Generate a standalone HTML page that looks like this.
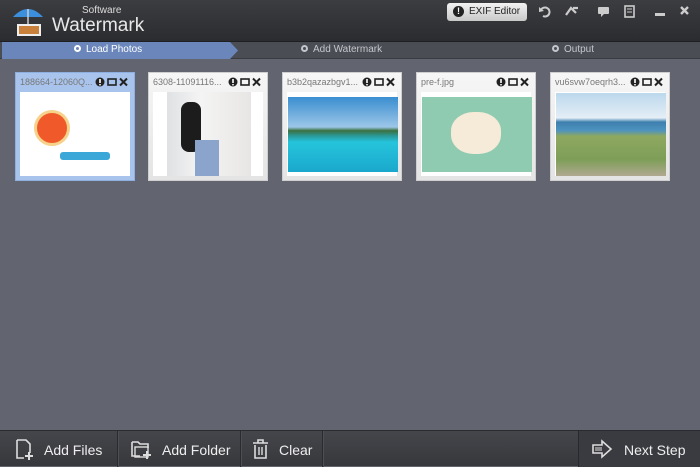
<!DOCTYPE html>
<html><head><style>
*{margin:0;padding:0;box-sizing:border-box}
body{width:700px;height:466px;overflow:hidden;background:#62656f;font-family:"Liberation Sans",sans-serif;position:relative}
.top{position:absolute;left:0;top:0;width:700px;height:42px;background:linear-gradient(#3c3d41,#2b2c30);border-bottom:1px solid #1e1f22}
.steps{position:absolute;left:0;top:42px;width:700px;height:17px;background:#4b4d54;border-bottom:1px solid #3a3b40;font-size:10px;color:#c4c6cc}
.blue{position:absolute;left:2px;top:0;height:17px;width:236px;background:#6a86bb;clip-path:polygon(0 0,228px 0,236px 8.5px,228px 17px,0 17px)}
.st{position:absolute;top:2px}
.st i{display:inline-block;width:7px;height:7px;border:2px solid currentColor;border-radius:50%;margin-right:5px}
.card{position:absolute;top:72px;width:120px;height:109px;background:linear-gradient(#f6f6f6,#e4e4e4);border:1px solid #cfcfcf}
.card.sel{background:#a9c4ec;border-color:#8eb0e0}
.card .n{position:absolute;left:4px;top:4px;font-size:9px;color:#777}
.card .ic{position:absolute;right:5px;top:4px}
.card .w{position:absolute;left:4px;top:19px;width:110px;height:84px;background:#fff}
.card .p{position:absolute}
.bot{position:absolute;left:0;top:430px;width:700px;height:36px;background:linear-gradient(#45464b,#37383c);border-top:1px solid #2a2b2e;color:#eee;font-size:14px}
.bt{position:absolute;top:11px}
.bi{position:absolute;top:8px}
.sep{position:absolute;top:0;width:1px;height:36px;background:#2a2b2f;box-shadow:1px 0 #4e4f54}
</style></head><body>
<svg width="0" height="0" style="position:absolute"><defs><g id="ci"><circle cx="5" cy="5" r="4.5" fill="#222"/><rect x="4.2" y="2" width="1.6" height="4" fill="#fff"/><rect x="4.2" y="7" width="1.6" height="1.4" fill="#fff"/><rect x="13" y="2" width="8" height="6" fill="none" stroke="#222" stroke-width="1.6"/><path d="M25 1.5 L32 8.5 M32 1.5 L25 8.5" stroke="#222" stroke-width="2"/></g></defs></svg>
<div class="top">
 <svg style="position:absolute;left:10px;top:3px" width="42" height="34"><path d="M3 14 Q18 -2 33 14 Z" fill="#3c8fdc"/><line x1="18" y1="6" x2="18" y2="24" stroke="#ccc" stroke-width="1.5"/><rect x="7" y="21" width="24" height="12" fill="#eee"/><rect x="9" y="23" width="20" height="8" fill="#c8803a"/></svg>
 <div style="position:absolute;left:82px;top:5px;font-size:10px;color:#ddd">Software</div>
 <div style="position:absolute;left:52px;top:15px;font-size:19px;color:#e8e8e8">Watermark</div>
 <div style="position:absolute;left:447px;top:3px;width:80px;height:18px;border-radius:3px;background:linear-gradient(#f2f2f2,#c8c8c8);font-size:10px;color:#222;padding:3px 0 0 6px"><span style="display:inline-block;width:11px;height:11px;border-radius:50%;background:#222;color:#fff;text-align:center;font-size:9px;line-height:11px;font-weight:bold;margin-right:5px">!</span>EXIF Editor</div>
 <svg style="position:absolute;left:538px;top:5px" width="155" height="14"><path d="M3 5 A4.5 4.5 0 1 1 5 11" fill="none" stroke="#ccc" stroke-width="2"/><path d="M1 2 L1 7 L6 6 Z" fill="#ccc"/>
 <path d="M28 10 L33 3 L38 8 M35 3 L40 3" fill="none" stroke="#ccc" stroke-width="2.2"/>
 <rect x="60" y="2" width="11" height="7" rx="1" fill="#ccc"/><path d="M63 9 L63 12 L66 9Z" fill="#ccc"/>
 <rect x="87" y="1" width="9" height="11" fill="none" stroke="#ccc" stroke-width="1.6"/><path d="M89 4h5M89 7h5" stroke="#ccc"/>
 <rect x="117" y="8" width="10" height="3" fill="#ccc"/>
 <path d="M143 2 L150 9 M150 2 L143 9" stroke="#ccc" stroke-width="2.4"/></svg>
</div>
<div class="steps"><div class="blue"></div>
 <div class="st" style="left:74px;color:#fff"><i></i>Load Photos</div>
 <div class="st" style="left:301px"><i></i>Add Watermark</div>
 <div class="st" style="left:552px"><i></i>Output</div>
</div>
<div class="card sel" style="left:15px"><div class="n">188664-12060Q...</div><svg class="ic" width="34" height="10"><use href="#ci"/></svg><div class="w"><div class="p" style="left:14px;top:18px;width:36px;height:36px;border-radius:50%;background:#f05a2a;border:3px solid #f6d28a"></div><div class="p" style="left:40px;top:60px;width:50px;height:8px;background:#3aa7d8;border-radius:3px"></div></div></div>
<div class="card" style="left:148px"><div class="n">6308-11091116...</div><svg class="ic" width="34" height="10"><use href="#ci"/></svg><div class="w"><div class="p" style="left:14px;top:0;width:84px;height:84px;background:linear-gradient(90deg,#dfe1e3,#f4f4f4 40%,#e8e6e4)"></div><div class="p" style="left:28px;top:10px;width:20px;height:50px;background:#1c1c1c;border-radius:8px"></div><div class="p" style="left:42px;top:48px;width:24px;height:36px;background:#8aa4cc"></div></div></div>
<div class="card" style="left:282px"><div class="n">b3b2qazazbgv1...</div><svg class="ic" width="34" height="10"><use href="#ci"/></svg><div class="w"><div class="p" style="left:1px;top:5px;width:110px;height:75px;background:linear-gradient(#3a8ed0,#9cc6e8 40%,#3a7040 45%,#2a9a9a 52%,#26c4dc 60%,#1aa8cc)"></div></div></div>
<div class="card" style="left:416px"><div class="n">pre-f.jpg</div><svg class="ic" width="34" height="10"><use href="#ci"/></svg><div class="w"><div class="p" style="left:1px;top:5px;width:110px;height:75px;background:#8fcbb0"></div><div class="p" style="left:30px;top:20px;width:50px;height:42px;border-radius:45%;background:#f6ead8"></div></div></div>
<div class="card" style="left:550px"><div class="n">vu6svw7oeqrh3...</div><svg class="ic" width="34" height="10"><use href="#ci"/></svg><div class="w"><div class="p" style="left:1px;top:1px;width:110px;height:83px;background:linear-gradient(#bcd8ec,#e4eef6 30%,#3d7fae 35%,#4d93bf 45%,#8ea860 52%,#7e9e58 80%,#b0a890)"></div></div></div>
<div class="bot">
 <svg class="bi" style="left:14px" width="22" height="22"><path d="M3 1 H12 L16 5 V14 M3 1 V19 H10" fill="none" stroke="#ddd" stroke-width="1.6"/><path d="M15 13 V21 M11 17 H19" stroke="#ddd" stroke-width="2"/></svg>
 <div class="bt" style="left:44px">Add Files</div>
 <div class="sep" style="left:117px"></div>
 <svg class="bi" style="left:130px" width="24" height="22"><path d="M2 3 H8 L10 5 H18 V9 M2 3 V17 H10" fill="none" stroke="#ddd" stroke-width="1.6"/><rect x="5" y="8" width="13" height="10" fill="none" stroke="#ddd" stroke-width="1.4"/><path d="M17 12 V20 M13 16 H21" stroke="#ddd" stroke-width="2"/></svg>
 <div class="bt" style="left:162px">Add Folder</div>
 <div class="sep" style="left:240px"></div>
 <svg class="bi" style="left:251px" width="20" height="22"><path d="M2 4 H17 M7 4 V1 H12 V4" fill="none" stroke="#ddd" stroke-width="1.6"/><path d="M4 6 V19 H15 V6" fill="none" stroke="#ddd" stroke-width="1.6"/><path d="M8 8 V16 M11 8 V16" stroke="#ddd" stroke-width="1.4"/></svg>
 <div class="bt" style="left:279px">Clear</div>
 <div class="sep" style="left:322px"></div>
 <div style="position:absolute;left:578px;top:0;width:122px;height:36px;background:#3a3b40;border-left:1px solid #28292c"></div>
 <svg class="bi" style="left:592px" width="22" height="20"><path d="M1 6 H10 V2 L19 10 L10 18 V14 H1 Z" fill="none" stroke="#ddd" stroke-width="1.6"/><path d="M3 9 H10 M3 11 H10" stroke="#ddd"/></svg>
 <div class="bt" style="left:624px">Next Step</div>
</div>
</body></html>
